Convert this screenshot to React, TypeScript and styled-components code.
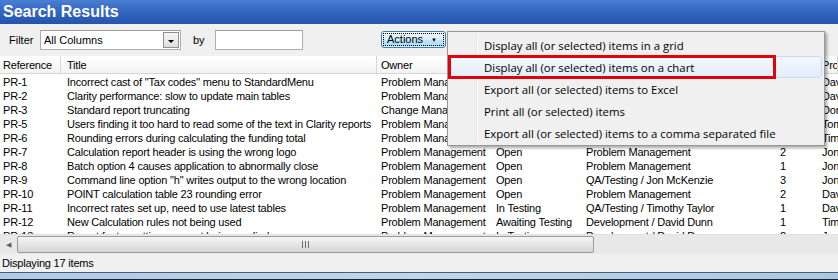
import React from 'react';
import styled, { createGlobalStyle } from 'styled-components';

const GlobalStyle = createGlobalStyle`
  html, body {
    margin: 0;
    padding: 0;
    overflow: hidden;
    background: #f0f0f0;
  }
`;

type Row = [string, string, string, string, string, string, string];

const rows: Row[] = [
  ['PR-1', 'Incorrect cast of "Tax codes" menu to StandardMenu', 'Problem Management', 'Open', 'Problem Management', '1', 'David Dunn'],
  ['PR-2', 'Clarity performance: slow to update main tables', 'Problem Management', 'Open', 'Problem Management', '2', 'David Dunn'],
  ['PR-3', 'Standard report truncating', 'Change Management', 'Open', 'Change Management', '1', 'Don Smith'],
  ['PR-5', 'Users finding it too hard to read some of the text in Clarity reports', 'Problem Management', 'Open', 'Problem Management', '3', 'Tom Jones'],
  ['PR-6', 'Rounding errors during calculating the funding total', 'Problem Management', 'Open', 'Problem Management', '2', 'Timothy Taylor'],
  ['PR-7', 'Calculation report header is using the wrong logo', 'Problem Management', 'Open', 'Problem Management', '2', 'Jon McKenzie'],
  ['PR-8', 'Batch option 4 causes application to abnormally close', 'Problem Management', 'Open', 'Problem Management', '1', 'Jon McKenzie'],
  ['PR-9', 'Command line option "h" writes output to the wrong location', 'Problem Management', 'Open', 'QA/Testing / Jon McKenzie', '3', 'Jon McKenzie'],
  ['PR-10', 'POINT calculation table 23 rounding error', 'Problem Management', 'Open', 'Problem Management', '2', 'David Dunn'],
  ['PR-11', 'Incorrect rates set up, need to use latest tables', 'Problem Management', 'In Testing', 'QA/Testing / Timothy Taylor', '1', 'David Dunn'],
  ['PR-12', 'New Calculation rules not being used', 'Problem Management', 'Awaiting Testing', 'Development / David Dunn', '1', 'Timothy Taylor'],
  ['PR-13', 'Report footer settings are not being applied', 'Problem Management', 'In Testing', 'Development / David Dunn', '2', 'Jon McKenzie'],
];

const headers = ['Reference', 'Title', 'Owner', 'Status', 'Assigned To', 'Priority', 'Problem Owner'];

const menuItems = [
  'Display all (or selected) items in a grid',
  'Display all (or selected) items on a chart',
  'Export all (or selected) items to Excel',
  'Print all (or selected) items',
  'Export all (or selected) items to a comma separated file',
];

// column padding-left, matched to where the text starts in each column
const colPad = [3, 6, 4, 4, 4, 20, 4];

export default function App() {
  return (
    <>
      <GlobalStyle />
      <Window>
        <TitleBar>Search Results</TitleBar>
        <Toolbar>
          <Label width={31}>Filter</Label>
          <Select>
            <SelectText>All Columns</SelectText>
            <DropButton>
              <DownTriangle />
            </DropButton>
          </Select>
          <Label gap={12} width={22}>
            by
          </Label>
          <TextBox />
          <ActionsWrap>
            <ActionsButton>
              <FocusRing>
                Actions <SmallArrow>▼</SmallArrow>
              </FocusRing>
            </ActionsButton>
            <Menu>
              <Gutter />
              {menuItems.map((item, index) => (
                <MenuItem key={item} active={index === 1}>
                  {item}
                </MenuItem>
              ))}
              <Callout />
            </Menu>
          </ActionsWrap>
        </Toolbar>

        <HeaderRow>
          {headers.map((label, index) => (
            <HeaderCell key={label} pad={colPad[index]}>
              {label}
            </HeaderCell>
          ))}
        </HeaderRow>
        <Body>
          {rows.map((row) => (
            <GridRow key={row[0]}>
              {row.map((value, index) => (
                <Cell key={index} pad={colPad[index]}>
                  {value}
                </Cell>
              ))}
            </GridRow>
          ))}
        </Body>

        <HScroll>
          <ScrollArrow>◀</ScrollArrow>
          <Thumb>
            <Grip />
          </Thumb>
        </HScroll>
        <StatusBar>Displaying 17 items</StatusBar>
        <TaskStrip />
      </Window>
    </>
  );
}

const columns = '61px 316px 115px 90px 178px 58px 20px';
const uiFont = `'Liberation Sans', Arial, sans-serif`;

const Window = styled.div`
  position: relative;
  width: 838px;
  height: 280px;
  display: flex;
  flex-direction: column;
  overflow: hidden;
  background: #f0f0f0;
  font-family: ${uiFont};
  font-size: 11px;
  color: #000;
`;

const TitleBar = styled.div`
  height: 24px;
  flex: none;
  display: flex;
  align-items: center;
  padding-left: 3px;
  color: #fff;
  font-weight: bold;
  font-size: 16px;
  background: linear-gradient(#4a7fd2 0%, #3568c2 45%, #2354ad 100%);
`;

const Toolbar = styled.div`
  height: 32px;
  flex: none;
  display: flex;
  align-items: center;
  padding-left: 9px;
  position: relative;
  z-index: 2;
`;

const Label = styled.span<{ gap?: number; width: number }>`
  flex: none;
  margin-left: ${({ gap }) => gap ?? 0}px;
  width: ${({ width }) => width}px;
  font-size: 11px;
`;

const Select = styled.div`
  flex: none;
  width: 141px;
  height: 20px;
  box-sizing: border-box;
  border: 1px solid #abadb3;
  border-top-color: #9a9ca3;
  background: #fff;
  display: flex;
  align-items: center;
  justify-content: space-between;
  padding: 0 1px 0 3px;
`;

const SelectText = styled.span`
  font-size: 11px;
`;

const DropButton = styled.div`
  width: 16px;
  height: 16px;
  box-sizing: border-box;
  border: 1px solid #8e8f8f;
  background: linear-gradient(#f6f6f6, #dedede);
  display: flex;
  align-items: center;
  justify-content: center;
`;

const DownTriangle = styled.div`
  width: 0;
  height: 0;
  border-left: 3px solid transparent;
  border-right: 3px solid transparent;
  border-top: 3px solid #000;
  margin-top: 2px;
`;

const TextBox = styled.div`
  flex: none;
  width: 88px;
  height: 20px;
  box-sizing: border-box;
  border: 1px solid #abadb3;
  border-top-color: #9a9ca3;
  background: #fff;
`;

const ActionsWrap = styled.div`
  flex: none;
  position: relative;
  margin-left: 78px;
  height: 17px;
  margin-top: -1px;
`;

const ActionsButton = styled.div`
  width: 65px;
  height: 17px;
  box-sizing: border-box;
  border: 1px solid #3c7fb1;
  border-radius: 3px;
  background: linear-gradient(#eaf6fd 0%, #d9f0fc 50%, #bee6fd 51%, #a7d9f5 100%);
  box-shadow: inset 0 0 0 1px rgba(255, 255, 255, 0.6);
  padding: 1px;
`;

const FocusRing = styled.div`
  height: 100%;
  box-sizing: border-box;
  border: 1px dotted #000;
  display: flex;
  align-items: center;
  padding-left: 3px;
  gap: 8px;
  font-size: 11px;
  line-height: 1;
`;

const SmallArrow = styled.span`
  font-size: 6px;
`;

const Menu = styled.div`
  position: absolute;
  left: 66px;
  top: 0;
  width: 378px;
  height: 115px;
  box-sizing: border-box;
  border: 1px solid #979797;
  background: #f0f0f0;
  box-shadow: 2px 2px 3px rgba(0, 0, 0, 0.35);
  padding: 2px;
  font-family: 'Open Sans', 'Noto Sans', sans-serif;
  font-size: 11.4px;
`;

const Gutter = styled.div`
  position: absolute;
  left: 28px;
  top: 2px;
  bottom: 2px;
  width: 1px;
  background: #e2e3e3;
  box-shadow: 1px 0 0 #fff;
`;

const MenuItem = styled.div<{ active?: boolean }>`
  position: relative;
  height: 22px;
  box-sizing: border-box;
  display: flex;
  align-items: center;
  padding-left: 33px;
  border: 1px solid ${({ active }) => (active ? '#c7dcf3' : 'transparent')};
  border-radius: 3px;
  background: ${({ active }) => (active ? 'linear-gradient(#f2f7fd, #e3edf9)' : 'transparent')};
  color: #000;
`;

const Callout = styled.div`
  position: absolute;
  left: 0;
  top: 23px;
  width: 328px;
  height: 24px;
  box-sizing: border-box;
  border: 3px solid #e2000d;
`;

const HeaderRow = styled.div`
  height: 18px;
  flex: none;
  display: grid;
  grid-template-columns: ${columns};
  background: linear-gradient(#ffffff, #f3f3f3);
  border-bottom: 1px solid #d5d5d5;
  box-sizing: border-box;
`;

const HeaderCell = styled.div<{ pad: number }>`
  display: flex;
  align-items: center;
  padding-left: ${({ pad }) => pad}px;
  border-right: 1px solid #d8d8d8;
  white-space: nowrap;
  overflow: hidden;
  font-size: 11px;
  letter-spacing: -0.2px;
`;

const Body = styled.div`
  height: 160px;
  flex: none;
  background: #fff;
  padding-top: 1px;
  box-sizing: border-box;
  overflow: hidden;
`;

const GridRow = styled.div`
  display: grid;
  grid-template-columns: ${columns};
  height: 14px;
`;

const Cell = styled.div<{ pad: number }>`
  padding-left: ${({ pad }) => pad}px;
  line-height: 14px;
  white-space: nowrap;
  overflow: hidden;
  font-size: 11px;
  letter-spacing: -0.2px;
`;

const HScroll = styled.div`
  height: 20px;
  flex: none;
  display: flex;
  align-items: center;
  background: #e8e8e8;
  border-top: 1px solid #e0e0e0;
  box-sizing: border-box;
`;

const ScrollArrow = styled.div`
  width: 17px;
  font-size: 7px;
  color: #606060;
  text-align: center;
`;

const Thumb = styled.div`
  width: 577px;
  height: 17px;
  box-sizing: border-box;
  border: 1px solid #9a9a9a;
  border-radius: 2px;
  background: linear-gradient(#f4f4f4, #e6e6e6 50%, #d6d6d6);
  display: flex;
  align-items: center;
  justify-content: center;
`;

const Grip = styled.div`
  width: 7px;
  height: 7px;
  background: repeating-linear-gradient(90deg, #6d6d6d 0 1px, transparent 1px 3px);
`;

const StatusBar = styled.div`
  height: 18px;
  flex: none;
  display: flex;
  align-items: center;
  padding-left: 2px;
  font-size: 11px;
  letter-spacing: -0.2px;
  background: #f0f0f0;
`;

const TaskStrip = styled.div`
  height: 8px;
  flex: none;
  box-sizing: border-box;
  border-top: 1px solid #4f5c69;
  border-bottom: 1px solid #1d2228;
  background: linear-gradient(90deg, #aecbe8 0%, #bcd7f0 50%, #a9c8e6 100%);
`;
